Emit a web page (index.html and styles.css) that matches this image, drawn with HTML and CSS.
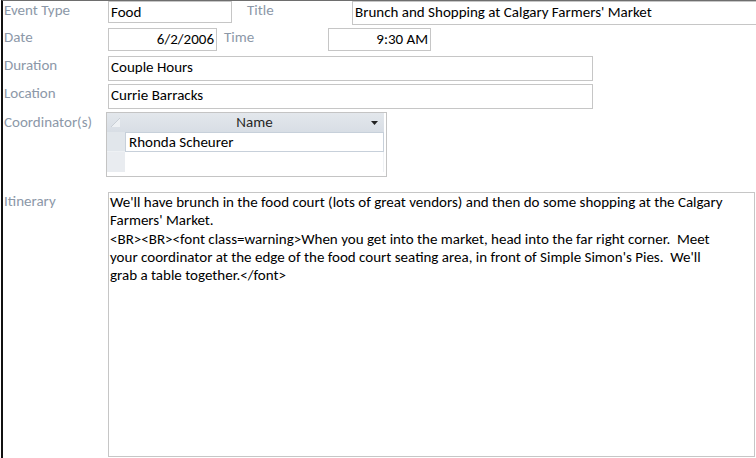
FILE: index.html
```html
<!DOCTYPE html>
<html lang="en">
<head>
    <meta charset="UTF-8">
    <meta name="viewport" content="width=device-width, initial-scale=1.0">
    <title>Event Details</title>
    <link rel="stylesheet" href="styles.css">
</head>
<body>
    <div class="form">
        <div class="row row-type">
            <div class="lbl">Event Type</div>
            <div class="box box-type">Food</div>
            <div class="lbl lbl-title">Title</div>
            <div class="box box-title">Brunch and Shopping at Calgary Farmers' Market</div>
        </div>

        <div class="row row-date">
            <div class="lbl">Date</div>
            <div class="box box-date num">6/2/2006</div>
            <div class="lbl lbl-time">Time</div>
            <div class="box box-time num">9:30 AM</div>
        </div>

        <div class="row row-duration">
            <div class="lbl">Duration</div>
            <div class="box box-wide">Couple Hours</div>
        </div>

        <div class="row row-location">
            <div class="lbl">Location</div>
            <div class="box box-wide">Currie Barracks</div>
        </div>

        <div class="row row-coord">
            <div class="lbl lbl-coord">Coordinator(s)</div>
            <div class="sub">
                <div class="sub-head">
                    <div class="corner">
                        <svg width="18" height="19" viewBox="0 0 18 19">
                            <path d="M4 14 L13 5 L13 14 Z" fill="#eef1f4"/>
                            <path d="M4 14 L13 5" stroke="#c9cfd6" stroke-width="1"/>
                        </svg>
                    </div>
                    <div class="col-head">
                        Name
                        <svg class="arrow" width="7" height="4" viewBox="0 0 7 4">
                            <path d="M0 0 L7 0 L3.5 4 Z" fill="#222"/>
                        </svg>
                    </div>
                </div>
                <div class="sub-row">
                    <div class="sel"></div>
                    <div class="cell">Rhonda Scheurer</div>
                </div>
                <div class="sub-row sub-new">
                    <div class="sel sel-new"></div>
                    <div class="cell cell-new"></div>
                </div>
            </div>
        </div>

        <div class="row row-itin">
            <div class="lbl">Itinerary</div>
            <div class="box box-itin">
                <div class="line">We'll have brunch in the food court (lots of great vendors) and then do some shopping at the Calgary</div>
                <div class="line">Farmers' Market.</div>
                <div class="line">&lt;BR&gt;&lt;BR&gt;&lt;font class=warning&gt;When you get into the market, head into the far right corner.  Meet</div>
                <div class="line">your coordinator at the edge of the food court seating area, in front of Simple Simon's Pies.  We'll</div>
                <div class="line">grab a table together.&lt;/font&gt;</div>
            </div>
        </div>
    </div>
</body>
</html>
```

FILE: styles.css
```css
* {
    box-sizing: border-box;
}

body {
    margin: 0;
    font-family: Carlito, Calibri, Lato, "Open Sans", sans-serif;
    font-size: 15px;
    color: #000;
    background: #fff;
    overflow: hidden;
}

.form {
    margin-left: 1px;
    border-left: 2px solid #111;
    border-top: 1px solid #6e6e6e;
    height: 458px;
    padding-left: 1px;
}

.row {
    display: flex;
    align-items: flex-start;
}

.lbl {
    width: 104px;
    flex: none;
    color: #8c98a8;
    line-height: 18px;
    white-space: nowrap;
}

.box {
    flex: none;
    border: 1px solid #c6c6c6;
    padding: 0 2px;
    line-height: 20px;
    white-space: nowrap;
    overflow: hidden;
    background: #fff;
}

.num {
    text-align: right;
}

/* event type / title */
.box-type {
    width: 124px;
    height: 22px;
}

.lbl-title {
    margin-left: 15px;
    width: 105px;
}

.box-title {
    width: 420px;
    height: 24px;
    padding-left: 2px;
}

/* date / time */
.row-date {
    margin-top: 3px;
}

.box-date {
    width: 109px;
    height: 23px;
}

.lbl-time {
    margin-left: 7px;
}

.box-time {
    width: 103px;
    height: 23px;
}

.row-duration {
    margin-top: 5px;
}

.row-location {
    margin-top: 3px;
}

.box-wide {
    width: 485px;
    height: 25px;
}

/* coordinators subform */
.row-coord {
    margin-top: 3px;
}

.lbl-coord {
    width: 102px;
    margin-top: 1px;
}

.sub {
    width: 281px;
    height: 65px;
    border: 1px solid #c4c4c4;
    padding: 0 2px 3px 0;
    background: #fff;
}

.sub-head {
    display: flex;
    height: 19px;
    background: linear-gradient(#e3e7ec, #d8dee5);
}

.corner {
    width: 18px;
    height: 19px;
}

.corner svg {
    display: block;
}

.col-head {
    flex: 1;
    position: relative;
    text-align: center;
    line-height: 19px;
    color: #262626;
}

.arrow {
    position: absolute;
    right: 6px;
    top: 8px;
}

.sub-row {
    display: flex;
    height: 20px;
}

.sel {
    width: 18px;
    background: #e1e6eb;
    border-bottom: 1px solid #eef1f4;
}

.sel-new {
    background: #e9ecf0;
    border-bottom: none;
}

.cell {
    flex: 1;
    border: 1px solid #c7d0da;
    padding-left: 3px;
    line-height: 18px;
}

.cell-new {
    border: none;
    border-right: 1px solid #eef1f4;
}

/* itinerary */
.row-itin {
    margin-top: 15px;
}

.box-itin {
    width: 647px;
    height: 265px;
    padding: 0 1px;
    line-height: 18.3px;
}

.line {
    white-space: pre;
}
```
